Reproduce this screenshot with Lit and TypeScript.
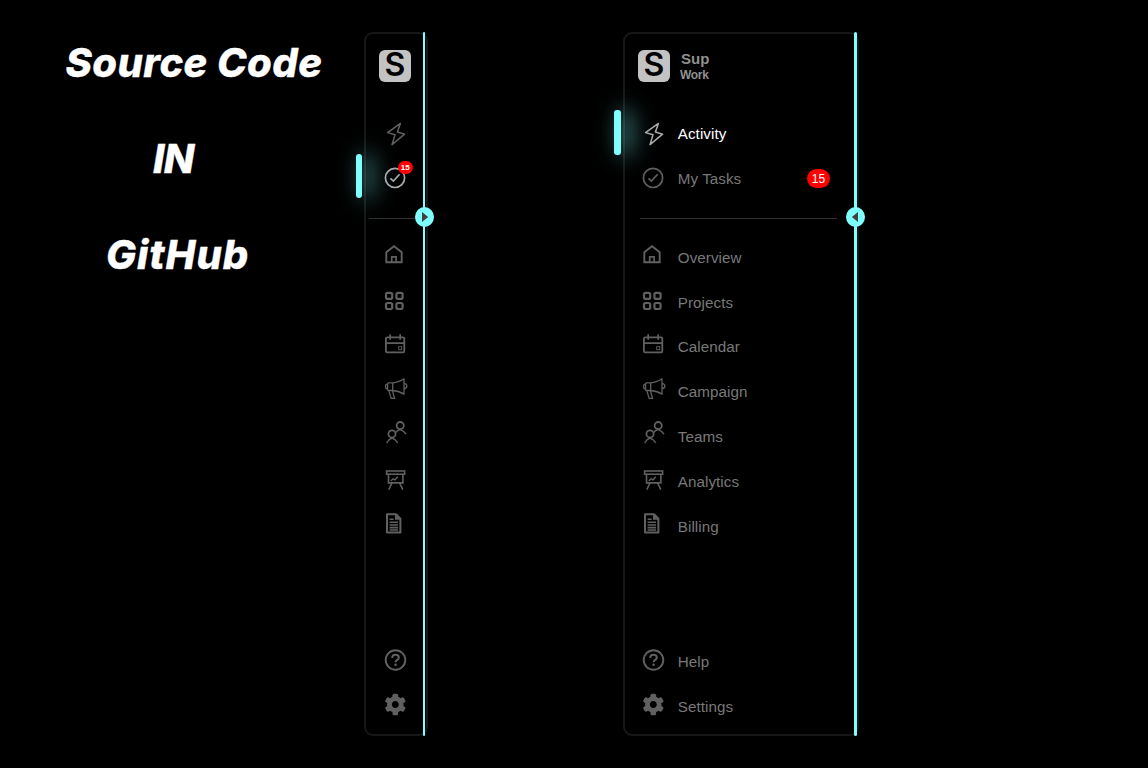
import { LitElement, html, svg, css, nothing } from "lit";
import { customElement, property } from "lit/decorators.js";
import { classMap } from "lit/directives/class-map.js";

const icons: Record<string, unknown> = {
  bolt: svg`<path stroke-width="1.5" stroke-linejoin="round" d="M16.4 3.4 3.6 12.6 11 14.8 8 24.6 20.6 14.2 13.4 12Z"/>`,
  check: svg`<circle cx="11" cy="12.9" r="9.6" stroke-width="1.7"/><path stroke-width="1.7" d="M6.4 13.3 9.4 16.1 15.6 9.2"/>`,
  home: svg`<path stroke-width="1.9" d="M2.3 18.3V8.2L10 2.3 17.7 8.2V18.3Z"/><path stroke-width="1.7" d="M7.7 18V12.8H12.1V18"/>`,
  grid: svg`<g stroke-width="2.2"><rect x="2" y="3.9" width="6.2" height="6" rx="1.7"/><rect x="12.4" y="3.9" width="6.2" height="6" rx="1.7"/><rect x="2" y="14" width="6.2" height="6" rx="1.7"/><rect x="12.4" y="14" width="6.2" height="6" rx="1.7"/></g>`,
  calendar: svg`<rect x="1.9" y="4.3" width="18.4" height="15" rx="1.3" stroke-width="1.8"/><path stroke-width="1.7" d="M2 10.1H20.3M6.2 1.3V6.7M16.2 1.3V6.7"/><rect x="14.7" y="13.7" width="3" height="3" stroke-width=".9"/>`,
  campaign: svg`<g stroke-width="1.3" stroke-linejoin="round"><path d="M8.7 4.8H4.6Q3.6 4.8 3.6 5.8V11.6Q3.6 12.5 4.6 12.5H8.7ZM3.6 5.8Q1.5 6.2 1.5 8.6T3.6 11.4M8.7 4.8Q15.5 4.2 20 .8V16.2Q15.5 13 8.7 12.5M20 5.4Q22.9 6 22.9 8.1T20 11M4.8 12.5 7 19.9Q7.2 20.4 7.8 20.4H10.6L8.4 12.8"/></g>`,
  teams: svg`<g stroke-width="1.8"><circle cx="16.2" cy="2.6" r="3.6"/><circle cx="8" cy="10.9" r="3.6"/><path stroke-width="1.5" d="M2.7 20Q4.2 16.4 8 15 12 16.4 13.8 20M12.1 9.4Q13.1 7.4 16.2 6.6 20.1 8 22 11.2"/></g>`,
  analytics: svg`<g stroke-width="1.6"><rect x="2.6" y="3" width="18" height="3.2"/><path d="M4.5 6.5V14.9H18.9V6.5M8 15 4.8 21.6M15.6 15 18.8 21.6"/><path stroke-width="1.4" d="M6.8 13 9.1 10.8 11 11.8 13.8 8.8"/></g>`,
  billing: svg`<path stroke-width="2" stroke-linejoin="round" d="M3 1.3H12.1L16.4 5.8V19.4H3Z"/><path class="solid" d="M11 1V6.8H16.8Z"/><path stroke-width="1.6" d="M5.6 6.2H9.6M5.6 9.3H14M5.6 12H14M5.6 14.6H14M5.6 17H14"/>`,
  help: svg`<circle cx="11.5" cy="12" r="9.8" stroke-width="1.9"/><path stroke-width="2" d="M8.2 10.1Q8.2 6.8 11.5 6.8 14.8 6.8 14.8 9.5C14.8 12 11.6 11.8 11.6 14.2"/><circle class="solid" cx="11.6" cy="16.7" r="1.3"/>`,
  settings: svg`<g transform="translate(11.3 11.5)"><circle r="5.9" stroke-width="4.8"/>${[0, 60, 120, 180, 240, 300].map(
    (a) => svg`<rect class="solid" transform="rotate(${a})" x="-2.8" y="-10.7" width="5.6" height="5" rx="1.5"/>`
  )}</g>`,
};

interface Item { icon: string; label: string; count?: number }

const top: Item[] = [
  { icon: "bolt", label: "Activity" },
  { icon: "check", label: "My Tasks", count: 15 },
];
const main: Item[] = [
  { icon: "home", label: "Overview" },
  { icon: "grid", label: "Projects" },
  { icon: "calendar", label: "Calendar" },
  { icon: "campaign", label: "Campaign" },
  { icon: "teams", label: "Teams" },
  { icon: "analytics", label: "Analytics" },
  { icon: "billing", label: "Billing" },
];
const bottom: Item[] = [
  { icon: "help", label: "Help" },
  { icon: "settings", label: "Settings" },
];

@customElement("side-bar")
export class SideBar extends LitElement {
  @property({ type: Boolean, reflect: true }) open = false;
  @property() active = "";

  static styles = css`
    :host {
      display: flex;
      flex-direction: column;
      box-sizing: border-box;
      position: relative;
      width: 64px;
      height: 704px;
      padding-top: 16px;
      border: 2px solid #171717;
      border-radius: 9px;
      font-family: "Liberation Sans", Arial, sans-serif;
      color: #787878;
    }
    :host([open]) { width: 236px; }
    .brand { display: flex; height: 32px; padding-left: 13px; gap: 10px; }
    .logo {
      width: 32px; height: 32px; border-radius: 6px; background: #c3c3c3;
      color: #000; font: 600 32px/30px Inter, "Liberation Sans", sans-serif; text-align: center;
    }
    .names { display: flex; flex-direction: column; font-weight: bold; color: #909090; }
    .name { font-size: 15px; line-height: 17px; padding-left: 1px; }
    .kind { font-size: 12px; line-height: 16px; letter-spacing: -0.3px; }
    nav { display: flex; flex-direction: column; }
    .first { padding-top: 29.6px; }
    .last { margin-top: auto; padding-bottom: 4.6px; }
    .item { position: relative; display: flex; align-items: center; height: 44.8px; padding-left: 18px; font-size: 15.2px; }
    :host([open]) .item { padding-left: 17px; }
    .label { padding-left: 7.8px; flex: 1; line-height: 18px; letter-spacing: 0.05px; }
    .on .label { color: #fff; }
    svg { width: 28px; height: 28px; overflow: visible; fill: none; stroke: #606060; flex: none; }
    svg .solid { fill: #606060; stroke: none; }
    .on svg { stroke: #aaa; }
    .on::before {
      content: ""; position: absolute; left: -10px; top: -2px; width: 6px; height: 44px;
      border-radius: 3px; background: #80ffff;
      box-shadow: 8px 0 22px rgba(128, 255, 255, 0.9);
    }
    :host([open]) .on::before { left: -11px; width: 7px; height: 45px; }
    .count {
      margin-right: 27px; width: 23px; height: 19px; border-radius: 10px; background: #f00;
      color: #fff; font-size: 12px; line-height: 20px; text-align: center;
    }
    :host(:not([open])) .count {
      position: absolute; left: 31.5px; top: 4.5px; margin: 0; width: 15.5px; height: 13px;
      font-size: 8px; line-height: 14px; font-weight: bold;
    }
    .rule { height: 1px; background: #303030; margin: 16.6px 9px 16.6px 3px; }
    :host([open]) .rule { margin-left: 15px; margin-right: 20px; }
    .edge { position: absolute; top: -2px; bottom: -2px; right: 1px; width: 2px; background: #80ffff; border-radius: 2px; }
    :host([open]) .edge { right: 0; width: 3px; }
    .knob {
      position: absolute; right: -8px; top: 173px; width: 19px; height: 20px; border-radius: 50%;
      background: #80ffff;
    }
    .knob svg { display: block; width: 19px; height: 20px; }
    :host([open]) .knob svg { transform: scaleX(-1); }
    .knob path { fill: #404040; stroke: none; }
  `;

  private row(item: Item) {
    return html`<div class=${classMap({ item: true, on: item.label === this.active })}>
      <svg viewBox="0 0 28 28">${icons[item.icon]}</svg>
      ${this.open ? html`<span class="label">${item.label}</span>` : nothing}
      ${item.count ? html`<span class="count">${item.count}</span>` : nothing}
    </div>`;
  }

  render() {
    return html`
      <div class="brand">
        <div class="logo">S</div>
        ${this.open ? html`<div class="names"><span class="name">Sup</span><span class="kind">Work</span></div>` : nothing}
      </div>
      <nav class="first">${top.map((i) => this.row(i))}</nav>
      <div class="rule"></div>
      <nav>${main.map((i) => this.row(i))}</nav>
      <nav class="last">${bottom.map((i) => this.row(i))}</nav>
      <div class="edge"></div>
      <div class="knob"><svg viewBox="0 0 19 20"><path d="M7 5 13.2 10 7 15Z"/></svg></div>
    `;
  }
}

@customElement("app-root")
export class AppRoot extends LitElement {
  static styles = css`
    :host {
      display: flex; box-sizing: border-box; width: 100%; height: 768px; padding-top: 32px;
      background: #000; overflow: hidden;
    }
    .title {
      width: 364px; flex: none; color: #fff;
      font: italic 800 40px/96px Inter, sans-serif; margin-top: -17px;
      -webkit-text-stroke: 0.3px #fff;
    }
    .title div { white-space: nowrap; }
    .a { padding-left: 65.5px; letter-spacing: 0.4px; }
    .b { padding-left: 153px; letter-spacing: -0.6px; }
    .c { padding-left: 106px; letter-spacing: 0.9px; }
    side-bar { flex: none; margin-right: 195px; }
  `;

  render() {
    return html`
      <div class="title">
        <div class="a">Source Code</div>
        <div class="b">IN</div>
        <div class="c">GitHub</div>
      </div>
      <side-bar active="My Tasks"></side-bar>
      <side-bar open active="Activity"></side-bar>
    `;
  }
}
